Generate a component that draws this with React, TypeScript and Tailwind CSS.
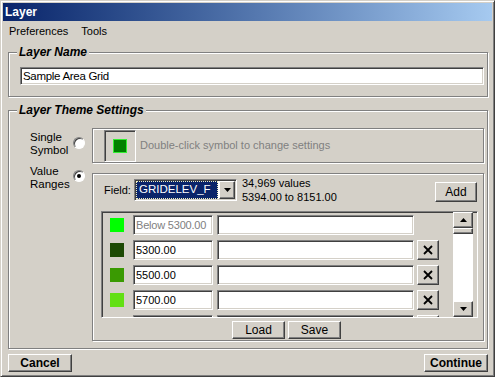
import React from 'react';

// classic 3D borders
const raised =
  'border border-t-white border-l-white border-r-[#404040] border-b-[#404040] shadow-[inset_-1px_-1px_0_#808080] bg-[#d4d0c8]';
const sunken =
  'border border-t-[#808080] border-l-[#808080] border-r-white border-b-white shadow-[inset_1px_1px_0_#404040,inset_-1px_-1px_0_#d4d0c8]';
const etched = 'border border-[#808080] shadow-[inset_1px_1px_0_#fff,1px_1px_0_#fff]';

interface RangeRow {
  color: string;
  from: string;
  muted?: boolean;
  removable?: boolean;
}

// last row is scrolled mostly out of view, only its top edge shows
const ranges: RangeRow[] = [
  { color: '#00ff00', from: 'Below 5300.00', muted: true },
  { color: '#1d4a04', from: '5300.00', removable: true },
  { color: '#3a9a02', from: '5500.00', removable: true },
  { color: '#62e014', from: '5700.00', removable: true },
  { color: '#4cb80a', from: '', removable: true },
];

const Radio: React.FC<{ checked?: boolean }> = ({ checked }) => (
  <div className="w-[12px] h-[12px] rounded-full bg-white border border-t-[#808080] border-l-[#808080] border-r-white border-b-white shadow-[inset_1px_1px_0_#404040] flex items-center justify-center">
    {checked && <div className="w-[4px] h-[4px] rounded-full bg-black" />}
  </div>
);

const Arrow: React.FC<{ up?: boolean }> = ({ up }) => (
  <svg width="7" height="4" viewBox="0 0 7 4">
    <polygon points={up ? '0,4 3.5,0 7,4' : '0,0 7,0 3.5,4'} fill="#000" />
  </svg>
);

const Button: React.FC<{ label: string; className?: string; bold?: boolean }> = ({ label, className, bold }) => (
  <div className={`${raised} flex items-center justify-center ${bold ? 'font-bold text-[12px]' : 'text-[12px]'} ${className ?? ''}`}>
    {label}
  </div>
);

export default function App() {
  return (
    <div className="w-[495px] h-[377px] bg-[#d4d0c8] border border-t-[#d4d0c8] border-l-[#d4d0c8] border-r-[#404040] border-b-[#404040] shadow-[inset_1px_1px_0_#fff,inset_-1px_-1px_0_#808080] p-[2px] font-['Liberation_Sans',Arial,sans-serif] text-black overflow-hidden">
      <div className="flex flex-col h-full">
        {/* title bar */}
        <div className="h-[18px] bg-linear-to-r from-[#0a246a] to-[#a6caf0] text-white font-bold text-[12px] leading-[18px] pl-[2px]">
          Layer
        </div>

        {/* menu */}
        <div className="h-[20px] flex items-center text-[11px] pl-[6px] gap-[13px]">
          <span>Preferences</span>
          <span>Tools</span>
        </div>

        <div className="flex flex-col pl-[5px] pr-[4px]">
          {/* Layer Name */}
          <fieldset className={`${etched} mt-[4px] p-0`}>
            <legend className="ml-[8px] px-[2px] text-[12px] font-bold italic leading-[14px] bg-[#d4d0c8]">
              Layer Name
            </legend>
            <div className="pl-[11px] pr-[3px] pt-[8px] pb-[11px]">
              <div className={`${sunken} h-[18px] bg-white text-[11.5px] leading-[14px] pl-[2px] pt-[1px] tracking-[-0.3px]`}>
                Sample Area Grid
              </div>
            </div>
          </fieldset>

          {/* Layer Theme Settings */}
          <fieldset className={`${etched} mt-[6px] p-0`}>
            <legend className="ml-[8px] px-[2px] text-[12px] font-bold italic leading-[14px] bg-[#d4d0c8]">
              Layer Theme Settings
            </legend>
            <div className="flex pb-[7px]">
              {/* left labels */}
              <div className="w-[83px] flex flex-col pt-[14px] gap-[8px] text-[11.5px] leading-[13px]">
                <div className="h-[26px] flex items-center">
                  <div className="pl-[21px]">
                    Single
                    <br />
                    Symbol
                  </div>
                  <div className="ml-auto mr-[7px] -mt-[2px]">
                    <Radio />
                  </div>
                </div>
                <div className="h-[26px] flex items-center">
                  <div className="pl-[21px]">
                    Value
                    <br />
                    Ranges
                  </div>
                  <div className="ml-auto mr-[7px] -mt-[4px]">
                    <Radio checked />
                  </div>
                </div>
              </div>

              {/* right panels */}
              <div className="flex-1 pt-[11px] pr-[3px] flex flex-col">
                <div className={`${etched} h-[35px] flex items-center pl-[11px]`}>
                  <div className="w-[32px] h-[32px] border border-t-[#808080] border-l-[#808080] border-r-white border-b-white shadow-[inset_1px_1px_0_#404040] flex items-center justify-center">
                    <div className="w-[14px] h-[14px] bg-[#008000] border border-[#33ee33]" />
                  </div>
                  <span className="ml-[4px] text-[11px] text-[#808080]">
                    Double-click symbol to change settings
                  </span>
                </div>

                <div className={`${etched} mt-[10px] h-[168px] flex flex-col pt-[5px] pl-[8px] pr-[5px]`}>
                  {/* field row */}
                  <div className="h-[22px] flex items-center text-[11px]">
                    <span className="w-[33px] pl-[3px]">Field:</span>
                    <div className={`${sunken} w-[103px] h-[22px] bg-white flex items-center pl-[1px] pr-[1px]`}>
                      <div className="w-[82px] h-[18px] bg-[#0a246a] text-white border border-dotted border-[#f0f0c0] flex items-center pl-[2px] text-[11.5px]">
                        GRIDELEV_F
                      </div>
                      <div className={`${raised} ml-auto w-[16px] h-[18px] flex items-center justify-center`}>
                        <Arrow />
                      </div>
                    </div>
                    <div className="ml-[5px] leading-[14px]">
                      34,969 values
                      <br />
                      5394.00 to 8151.00
                    </div>
                    <Button label="Add" className="ml-auto mr-[1px] w-[42px] h-[20px] self-start mt-[3px]" />
                  </div>

                  {/* range list */}
                  <div className={`${sunken} mt-[10px] h-[107px] flex overflow-hidden pr-[2px]`}>
                    <div className="flex flex-col gap-[5px] pt-[3px] pl-[8px] overflow-hidden">
                      {ranges.map((r, idx) => (
                        <div key={idx} className="h-[20px] flex items-center shrink-0">
                          <div className="w-[14px] h-[14px]" style={{ backgroundColor: r.color }} />
                          <div
                            className={`${sunken} ml-[9px] w-[80px] h-[20px] bg-white flex items-center pl-[2px] text-[11px] whitespace-nowrap overflow-hidden ${
                              r.muted ? 'text-[#808080] tracking-[-0.2px]' : 'text-black'
                            }`}
                          >
                            {r.from}
                          </div>
                          <div className={`${sunken} ml-[4px] w-[197px] h-[20px] bg-white`} />
                          {r.removable ? (
                            <div className={`${raised} ml-[3px] w-[22px] h-[20px] flex items-center justify-center`}>
                              <svg width="10" height="10" viewBox="0 0 10 10">
                                <path d="M1 1 L9 9 M9 1 L1 9" stroke="#000" strokeWidth="1.8" />
                              </svg>
                            </div>
                          ) : (
                            <div className="ml-[3px] w-[22px]" />
                          )}
                        </div>
                      ))}
                    </div>

                    {/* scrollbar */}
                    <div className="ml-[14px] w-[20px] flex flex-col">
                      <div className={`${raised} h-[16px] flex items-center justify-center`}>
                        <Arrow up />
                      </div>
                      <div className={`${raised} h-[6px]`} />
                      <div className="flex-1 bg-white" />
                      <div className={`${raised} h-[16px] flex items-center justify-center`}>
                        <Arrow />
                      </div>
                    </div>
                  </div>

                  {/* load / save */}
                  <div className="mt-[3px] flex justify-center gap-[3px] pr-[6px]">
                    <Button label="Load" className="w-[53px] h-[18px]" />
                    <Button label="Save" className="w-[53px] h-[18px]" />
                  </div>
                </div>
              </div>
            </div>
          </fieldset>

          {/* bottom buttons */}
          <div className="mt-[5px] flex justify-between">
            <Button label="Cancel" bold className="w-[64px] h-[18px]" />
            <Button label="Continue" bold className="w-[64px] h-[18px]" />
          </div>
        </div>
      </div>
    </div>
  );
}
